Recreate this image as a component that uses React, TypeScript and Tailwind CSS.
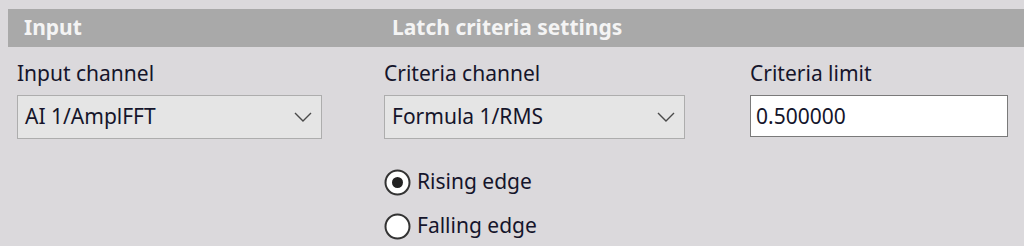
import React, { useState } from 'react';

const font = { fontFamily: '"Noto Sans", "Open Sans", sans-serif' };

const Chevron: React.FC = () => (
  <svg width="18" height="10" viewBox="0 0 18 10" className="shrink-0">
    <path d="M1 1 L9 9 L17 1" fill="none" stroke="#4a4a4a" strokeWidth="1.4" />
  </svg>
);

const Select: React.FC<{ value: string; width: string }> = ({ value, width }) => (
  <div
    className={`${width} h-[44px] bg-[#e5e5e5] border border-[#adadad] flex items-center justify-between pl-[7px] pr-[9px] text-[21px] text-[#15152b]`}
  >
    <span>{value}</span>
    <Chevron />
  </div>
);

const Radio: React.FC<{ checked: boolean; label: string; onClick: () => void }> = ({ checked, label, onClick }) => (
  <div className="flex items-center gap-[6px] h-[44px] cursor-pointer" onClick={onClick}>
    <svg width="27" height="27" viewBox="0 0 27 27">
      <circle cx="13.5" cy="13.5" r="12" fill="#ffffff" stroke="#333333" strokeWidth="2" />
      {checked && <circle cx="13.5" cy="13.5" r="5.5" fill="#222222" />}
    </svg>
    <span className="text-[21px] text-[#15152b]">{label}</span>
  </div>
);

export default function App() {
  const [edge, setEdge] = useState<'rising' | 'falling'>('rising');

  return (
    <div className="w-[1024px] h-[246px] bg-[#dbd9dc] pt-[9px] overflow-hidden" style={font}>
      {/* Section header */}
      <div className="ml-[8px] h-[38px] bg-[#a9a9a9] flex items-center text-[21px] font-bold text-[#f4f4f4]">
        <span className="w-[384px] pl-[16px]">Input</span>
        <span>Latch criteria settings</span>
      </div>

      <div className="grid grid-cols-[367px_366px_258px] pl-[17px] pt-[12px]">
        <div>
          <div className="text-[21px] leading-[28px] text-[#15152b] mb-[8px]">Input channel</div>
          <Select value="AI 1/AmplFFT" width="w-[305px]" />
        </div>

        <div>
          <div className="text-[21px] leading-[28px] text-[#15152b] mb-[8px]">Criteria channel</div>
          <Select value="Formula 1/RMS" width="w-[301px]" />
          <div className="mt-[21px] flex flex-col">
            <Radio checked={edge === 'rising'} label="Rising edge" onClick={() => setEdge('rising')} />
            <Radio checked={edge === 'falling'} label="Falling edge" onClick={() => setEdge('falling')} />
          </div>
        </div>

        <div>
          <div className="text-[21px] leading-[28px] text-[#15152b] mb-[8px]">Criteria limit</div>
          <input
            defaultValue="0.500000"
            className="w-[258px] h-[42px] bg-white border border-[#7a7a7a] px-[5px] text-[21px] text-[#15152b] outline-none"
            style={font}
          />
        </div>
      </div>
    </div>
  );
}
